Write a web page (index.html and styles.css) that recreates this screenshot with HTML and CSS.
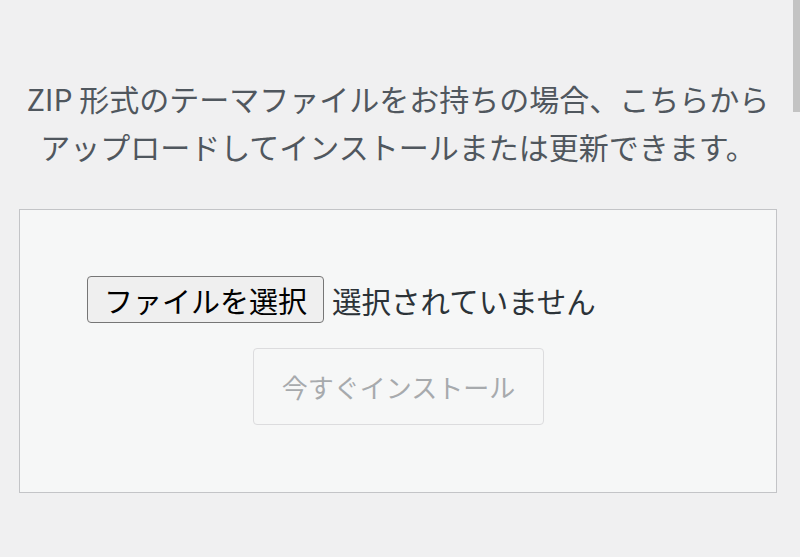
FILE: index.html
```html
<!DOCTYPE html>
<html lang="ja">
<head>
    <meta charset="UTF-8">
    <meta name="viewport" content="width=device-width, initial-scale=1.0">
    <title>テーマのアップロード</title>
    <link rel="stylesheet" href="styles.css">
</head>
<body>
    <div class="scroll-thumb"></div>
    <div class="upload-theme">
        <p class="install-help">ZIP 形式のテーマファイルをお持ちの場合、こちらから<br>アップロードしてインストールまたは更新できます。</p>

        <form class="upload-form">
            <div class="file-row">
                <button type="button" class="file-button">ファイルを選択</button>
                <span class="file-name">選択されていません</span>
            </div>
            <div class="submit-row">
                <button type="submit" class="install-button" disabled>今すぐインストール</button>
            </div>
        </form>
    </div>
</body>
</html>
```

FILE: styles.css
```css
* {
    box-sizing: border-box;
}

body {
    margin: 0;
    background: #f0f0f1;
    font-family: "Noto Sans CJK JP", "Noto Sans", sans-serif;
    color: #50575e;
}

.scroll-thumb {
    position: absolute;
    top: 0;
    right: 0;
    width: 7px;
    height: 112px;
    background: #c3c3c3;
}

.upload-theme {
    padding: 0 23px 0 19px;
}

.install-help {
    margin: 0;
    padding-top: 74px;
    text-align: center;
    font-size: 30px;
    line-height: 48px;
    color: #50575e;
}

.upload-form {
    margin-top: 39px;
    padding: 66px 66px 67px 67px;
    background: #f6f7f7;
    border: 1px solid #c3c4c7;
}

.file-row {
    display: flex;
    align-items: center;
    gap: 8px;
}

.file-button {
    height: 47px;
    padding: 0 16px;
    font-family: inherit;
    font-size: 29px;
    color: #000;
    background: #efefef;
    border: 1px solid #767676;
    border-radius: 4px;
}

.file-name {
    font-size: 29.5px;
    color: #2c3338;
}

.submit-row {
    display: flex;
    justify-content: center;
    margin-top: 25px;
}

.install-button {
    height: 77px;
    padding: 0 28px;
    font-family: inherit;
    font-size: 26px;
    color: #a7aaad;
    background: #f6f7f7;
    border: 1px solid #dcdcde;
    border-radius: 4px;
}
```
